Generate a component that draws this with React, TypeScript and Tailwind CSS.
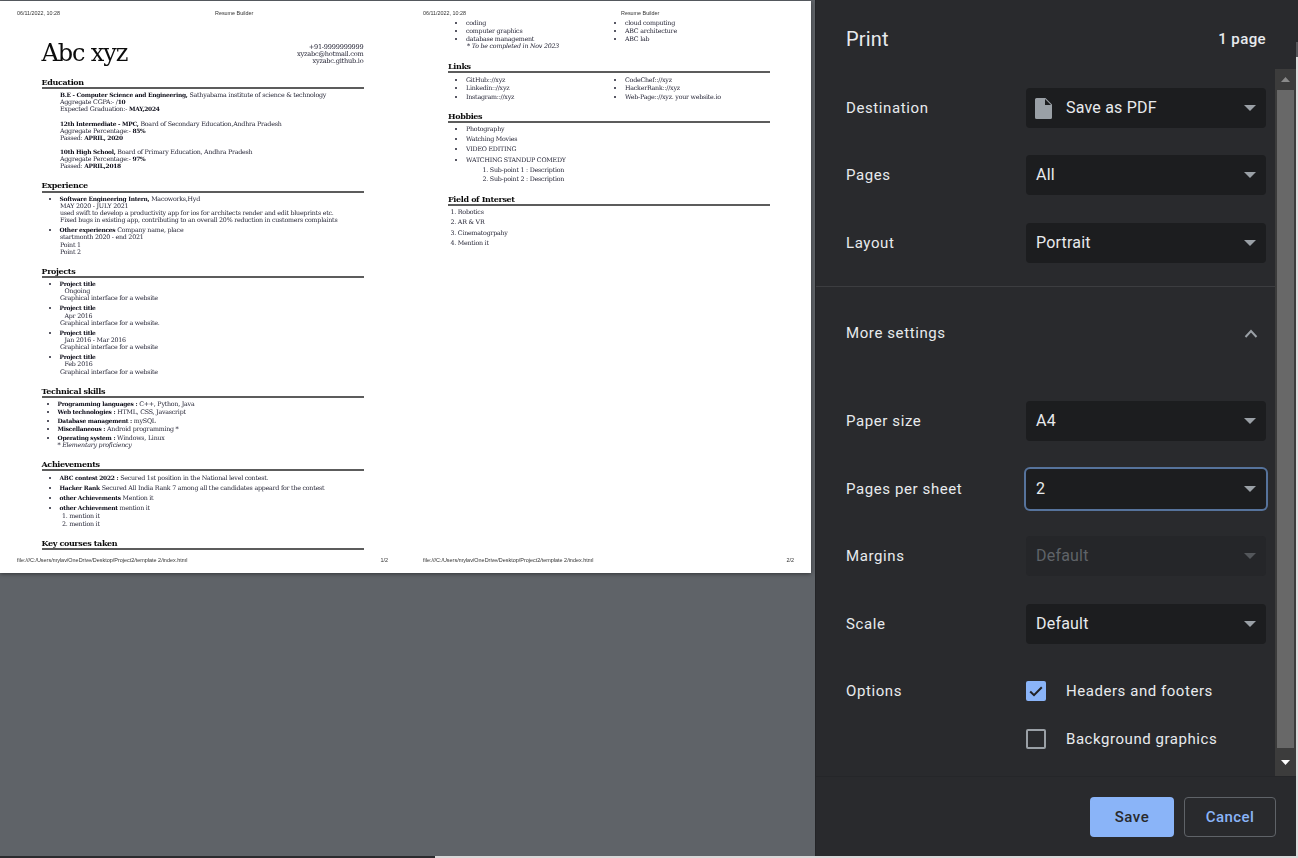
import React from 'react';

const L: React.FC<{ className?: string; children: React.ReactNode }> = ({ className = '', children }) => (
  <div className={`h-[7px] leading-[7px] whitespace-nowrap ${className}`}>{children}</div>
);

const Li: React.FC<{ className?: string; children: React.ReactNode }> = ({ className = '', children }) => (
  <li className={`h-[7px] leading-[7px] whitespace-nowrap list-disc ml-[18px] ${className}`}>{children}</li>
);

const Heading: React.FC<{ title: string; className: string; ruleClass?: string }> = ({ title, className, ruleClass = '' }) => (
  <div className={className}>
    <div className="h-[10px] leading-[10px] text-[8px] tracking-[-0.35px] font-bold text-[#0c0c0c]">{title}</div>
    <div className={`h-[2px] bg-[#5c5c5c] ${ruleClass}`} />
  </div>
);

const B: React.FC<{ children: React.ReactNode }> = ({ children }) => (
  <b className="font-bold text-[5.9px] tracking-[-0.25px] text-[#0c0c18]">{children}</b>
);

const PageChrome: React.FC<{ center: string; num: string; children: React.ReactNode }> = ({ center, num, children }) => (
  <div className="w-[406px] h-full flex flex-col shrink-0 blur-[0.25px]">
    <div className="h-[7px] mt-[9px] shrink-0 flex pl-[17px] text-[5.4px] leading-[7px] font-['Liberation_Sans',sans-serif] text-[#333]">
      <span className="w-[198px]">06/11/2022, 10:28</span>
      <span>{center}</span>
    </div>
    <div className="flex-1 min-h-0 font-['DejaVu_Serif',serif] text-[6.3px] tracking-[-0.23px] text-[#1f1f30]">{children}</div>
    <div className="h-[7px] mb-[9px] shrink-0 flex justify-between pl-[17px] pr-[18px] text-[5.45px] leading-[7px] font-['Liberation_Sans',sans-serif] text-[#333]">
      <span>file:///C:/Users/mylav/OneDrive/Desktop/Project2/template 2/index.html</span>
      <span>{num}</span>
    </div>
  </div>
);

const PageOne = () => (
  <PageChrome center="Resume Builder" num="1/2">
    <div className="ml-[41.5px] w-[322px]">
      <div className="mt-[23px] h-[26px] flex justify-between">
        <div className="text-[24px] tracking-[-1.1px] leading-[26px] text-[#0c0c0c]">Abc xyz</div>
        <div className="pt-[4px] text-right text-[6.6px]">
          <L>+91-9999999999</L>
          <L>xyzabc@hotmail.com</L>
          <L>xyzabc.github.io</L>
        </div>
      </div>

      <Heading title="Education" className="mt-[11px]" />
      <div className="ml-[18.5px]">
        <L className="mt-[2px]"><B>B.E - Computer Science and Engineering,</B> Sathyabama institute of science &amp; technology</L>
        <L>Aggregate CGPA:- /<B>10</B></L>
        <L>Expected Graduation:- <B>MAY,2024</B></L>
        <L className="mt-[8px]"><B>12th Intermediate - MPC,</B> Board of Secondary Education,Andhra Pradesh</L>
        <L>Aggregate Percentage:- <B>85%</B></L>
        <L>Passed: <B>APRIL, 2020</B></L>
        <L className="mt-[7px]"><B>10th High School,</B> Board of Primary Education, Andhra Pradesh</L>
        <L>Aggregate Percentage:- <B>97%</B></L>
        <L>Passed: <B>APRIL,2018</B></L>
      </div>

      <Heading title="Experience" className="mt-[11px]" ruleClass="mt-[1px]" />
      <ul>
        <Li className="mt-[2px]"><B>Software Engineering Intern,</B> Macoworks,Hyd</Li>
        <L className="ml-[18.5px]">MAY 2020 - JULY 2021</L>
        <L className="ml-[18.5px]">used swift to develop a productivity app for ios for architects render and edit blueprints etc.</L>
        <L className="ml-[18.5px]">Fixed bugs in existing app, contributing to an overall 20% reduction in customers complaints</L>
        <Li className="mt-[3px]"><B>Other experiences</B> Company name, place</Li>
        <L className="ml-[18.5px]">startmonth 2020 - end 2021</L>
        <L className="ml-[18.5px] mt-[1px]">Point 1</L>
        <L className="ml-[18.5px]">Point 2</L>
      </ul>

      <Heading title="Projects" className="mt-[11px]" />
      <ul>
        <Li className="mt-[2px]"><B>Project title</B></Li>
        <L className="ml-[23px]">Ongoing</L>
        <L className="ml-[18.5px]">Graphical interface for a website</L>
        <Li className="mt-[3px]"><B>Project title</B></Li>
        <L className="ml-[23px] mt-[1px]">Apr 2016</L>
        <L className="ml-[18.5px]">Graphical interface for a website.</L>
        <Li className="mt-[3px]"><B>Project title</B></Li>
        <L className="ml-[23px]">Jan 2016 - Mar 2016</L>
        <L className="ml-[18.5px]">Graphical interface for a website</L>
        <Li className="mt-[3px]"><B>Project title</B></Li>
        <L className="ml-[23px]">Feb 2016</L>
        <L className="ml-[18.5px] mt-[1px]">Graphical interface for a website</L>
      </ul>

      <Heading title="Technical skills" className="mt-[11px]" />
      <ul>
        <Li className="mt-[2px] !ml-[16px]"><B>Programming languages :</B> C++, Python, Java</Li>
        <Li className="mt-[1px] !ml-[16px]"><B>Web technologies :</B> HTML, CSS, Javascript</Li>
        <Li className="mt-[2px] !ml-[16px]"><B>Database management :</B> mySQL</Li>
        <Li className="mt-[1px] !ml-[16px]"><B>Miscellaneous :</B> Android programming *</Li>
        <Li className="mt-[2px] !ml-[16px]"><B>Operating system :</B> Windows, Linux</Li>
        <L className="ml-[16px] italic">* Elementary proficiency</L>
      </ul>

      <Heading title="Achievements" className="mt-[11px]" />
      <ul>
        <Li className="mt-[3px]"><B>ABC contest 2022 :</B> Secured 1st position in the National level contest.</Li>
        <Li className="mt-[3px]"><B>Hacker Rank</B> Secured All India Rank 7 among all the candidates appeard for the contest</Li>
        <Li className="mt-[3px]"><B>other Achievements</B> Mention it</Li>
        <Li className="mt-[3px]"><B>other Achievement</B> mention it</Li>
        <L className="ml-[20.5px] mt-[1px]">1. mention it</L>
        <L className="ml-[20.5px] mt-[1px]">2. mention it</L>
      </ul>

      <Heading title="Key courses taken" className="mt-[11px]" />
    </div>
  </PageChrome>
);

const PageTwo = () => (
  <PageChrome center="Resume Builder" num="2/2">
    <div className="ml-[42px] w-[322px]">
      <div className="mt-[2px] grid grid-cols-2">
        <ul>
          <Li>coding</Li>
          <Li className="mt-[1px]">computer graphics</Li>
          <Li className="mt-[1px]">database management</Li>
          <L className="ml-[19px] italic">* To be completed in Nov 2023</L>
        </ul>
        <ul className="ml-[-2px]">
          <Li>cloud computing</Li>
          <Li className="mt-[1px]">ABC architecture</Li>
          <Li className="mt-[1px]">ABC lab</Li>
        </ul>
      </div>

      <Heading title="Links" className="mt-[12px]" />
      <div className="mt-[3px] grid grid-cols-2">
        <ul>
          <Li>GitHub:://xyz</Li>
          <Li className="mt-[1px]">Linkedin:://xyz</Li>
          <Li className="mt-[2px]">Instagram:://xyz</Li>
        </ul>
        <ul className="ml-[-2px]">
          <Li>CodeChef:://xyz</Li>
          <Li className="mt-[1px]">HackerRank:://xyz</Li>
          <Li className="mt-[2px]">Web-Page:://xyz. your website.io</Li>
        </ul>
      </div>

      <Heading title="Hobbies" className="mt-[11px]" />
      <ul>
        <Li className="mt-[2px]">Photography</Li>
        <Li className="mt-[3px]">Watching Movies</Li>
        <Li className="mt-[3px]">VIDEO EDITING</Li>
        <Li className="mt-[4px]">WATCHING STANDUP COMEDY</Li>
        <L className="ml-[34.5px] mt-[3px]">1. Sub-point 1 : Description</L>
        <L className="ml-[34.5px] mt-[2px]">2. Sub-point 2 : Description</L>
      </ul>

      <Heading title="Field of Interset" className="mt-[12px]" />
      <L className="ml-[2.5px] mt-[2px]">1. Robotics</L>
      <L className="ml-[2.5px] mt-[3px]">2. AR &amp; VR</L>
      <L className="ml-[2.5px] mt-[4px]">3. Cinematogrpahy</L>
      <L className="ml-[2.5px] mt-[3px]">4. Mention it</L>
    </div>
  </PageChrome>
);

const Caret = () => (
  <svg width="12" height="6" viewBox="0 0 12 6" className="shrink-0 fill-[#9aa0a6]">
    <path d="M0 0h12L6 6z" />
  </svg>
);

const Select: React.FC<{ value: string; icon?: boolean; focused?: boolean; disabled?: boolean }> = ({ value, icon, focused, disabled }) => (
  <div
    className={`w-[240px] h-[40px] rounded-[4px] flex items-center pl-[10px] pr-[10px] text-[16px] tracking-[0.2px] ${
      disabled ? 'bg-[#252629] text-[#5f6368]' : 'bg-[#1c1d1f] text-[#e8eaed]'
    } ${focused ? 'ring-2 ring-[#56739c]' : ''}`}
  >
    {icon && (
      <svg width="17" height="21" viewBox="0 0 17 21" className="-ml-[1px] mr-[14px] shrink-0 fill-[#9aa0a6]">
        <path d="M1.5 0H10.5L17 6.5V19.5A1.5 1.5 0 0 1 15.5 21H1.5A1.5 1.5 0 0 1 0 19.5V1.5A1.5 1.5 0 0 1 1.5 0Z" />
        <path d="M10 1V7H16Z" className="fill-[#1c1d1f]" />
      </svg>
    )}
    <span className="flex-1">{value}</span>
    <span className={disabled ? 'opacity-40' : ''}><Caret /></span>
  </div>
);

const Row: React.FC<{ label: string; className: string; children: React.ReactNode }> = ({ label, className, children }) => (
  <div className={`flex items-center pl-[30px] ${className}`}>
    <div className="w-[180px] text-[15px] tracking-[0.6px] text-[#e8eaed]">{label}</div>
    {children}
  </div>
);

const Settings = () => (
  <div className="flex-1 min-w-0 h-full">
    <Row label="Destination" className="mt-[19px]"><Select value="Save as PDF" icon /></Row>
    <Row label="Pages" className="mt-[27px]"><Select value="All" /></Row>
    <Row label="Layout" className="mt-[28px]"><Select value="Portrait" /></Row>
    <div className="mt-[23px] h-px bg-[#3c3d40]" />
    <div className="h-[92px] flex items-center justify-between pl-[30px] pr-[17px]">
      <span className="text-[15px] tracking-[0.6px] text-[#e8eaed]">More settings</span>
      <svg width="14" height="9" viewBox="0 0 14 9" fill="none" stroke="#9aa0a6" strokeWidth="2">
        <path d="M1.5 8L7 2l5.5 6" />
      </svg>
    </div>
    <Row label="Paper size" className="mt-[22px]"><Select value="A4" /></Row>
    <Row label="Pages per sheet" className="mt-[28px]"><Select value="2" focused /></Row>
    <Row label="Margins" className="mt-[27px]"><Select value="Default" disabled /></Row>
    <Row label="Scale" className="mt-[28px]"><Select value="Default" /></Row>
    <div className="flex pl-[30px] mt-[37px]">
      <div className="w-[180px] text-[15px] tracking-[0.6px] text-[#e8eaed] leading-[20px]">Options</div>
      <div>
        <div className="flex items-center gap-[20px] h-[20px]">
          <div className="w-[20px] h-[20px] rounded-[2px] bg-[#8ab4f8] flex items-center justify-center">
            <svg width="14" height="11" viewBox="0 0 14 11" fill="none" stroke="#202124" strokeWidth="2">
              <path d="M1.2 5.5L5 9.2l7.8-8" />
            </svg>
          </div>
          <span className="text-[15px] tracking-[0.55px] text-[#e8eaed]">Headers and footers</span>
        </div>
        <div className="flex items-center gap-[20px] h-[20px] mt-[28px]">
          <div className="w-[20px] h-[20px] rounded-[2px] border-2 border-[#9aa0a6]" />
          <span className="text-[15px] tracking-[0.55px] text-[#e8eaed]">Background graphics</span>
        </div>
      </div>
    </div>
  </div>
);

const Scrollbar = () => (
  <div className="w-[21px] h-full shrink-0 bg-[#3c3c3c] flex flex-col items-center">
    <div className="h-[21px] flex items-center justify-center">
      <svg width="9" height="5" viewBox="0 0 9 5" className="fill-[#8a8a8a]"><path d="M4.5 0L9 5H0z" /></svg>
    </div>
    <div className="w-[17px] flex-1 bg-[#686868]" />
    <div className="h-[28px] flex items-center justify-center">
      <svg width="9" height="5" viewBox="0 0 9 5" className="fill-white"><path d="M0 0h9L4.5 5z" /></svg>
    </div>
  </div>
);

export default function App() {
  return (
    <div className="w-[1298px] h-[858px] overflow-hidden flex flex-col bg-[#5f6368] font-['Roboto',sans-serif]">
      <div className="h-[856px] flex shrink-0">
        {/* Preview */}
        <div className="w-[815px] shrink-0 pt-px bg-[#5f6368]">
          <div className="w-[811px] h-[572px] bg-white flex shadow-[0_1px_4px_rgba(0,0,0,0.45)] overflow-hidden">
            <PageOne />
            <div className="w-[405px] shrink-0 overflow-hidden">
              <PageTwo />
            </div>
          </div>
        </div>

        {/* Sidebar */}
        <aside className="w-[481px] shrink-0 bg-[#292a2d] border-l border-[#232427] flex flex-col">
          <div className="h-[69px] shrink-0 flex items-center justify-between pl-[30px] pr-[30px] pt-[9px]">
            <h1 className="text-[20px] tracking-[0.2px] text-[#e8eaed]">Print</h1>
            <span className="text-[15px] font-medium tracking-[0.4px] text-[#e8eaed]">1 page</span>
          </div>
          <div className="h-[707px] shrink-0 flex">
            <Settings />
            <Scrollbar />
          </div>
          <div className="flex-1 border-t border-[#252629] flex justify-end gap-[10px] pt-[20px] pr-[20px]">
            <button className="w-[84px] h-[40px] rounded-[4px] bg-[#8ab4f8] text-[15px] font-medium tracking-[0.5px] text-[#292a2d]">Save</button>
            <button className="w-[92px] h-[40px] rounded-[4px] border border-[#5f6368] text-[15px] font-medium tracking-[0.4px] text-[#8ab4f8]">Cancel</button>
          </div>
        </aside>

        <div className="w-[2px] shrink-0 flex flex-col bg-[#dedede]">
          <div className="h-[42px] bg-[#292a2d]" />
          <div className="h-[15px] bg-[#55565a]" />
        </div>
      </div>
      <div className="h-[2px] shrink-0 flex bg-[#d8d8d8]">
        <div className="w-[435px] bg-[#2a2b2e]" />
      </div>
    </div>
  );
}
